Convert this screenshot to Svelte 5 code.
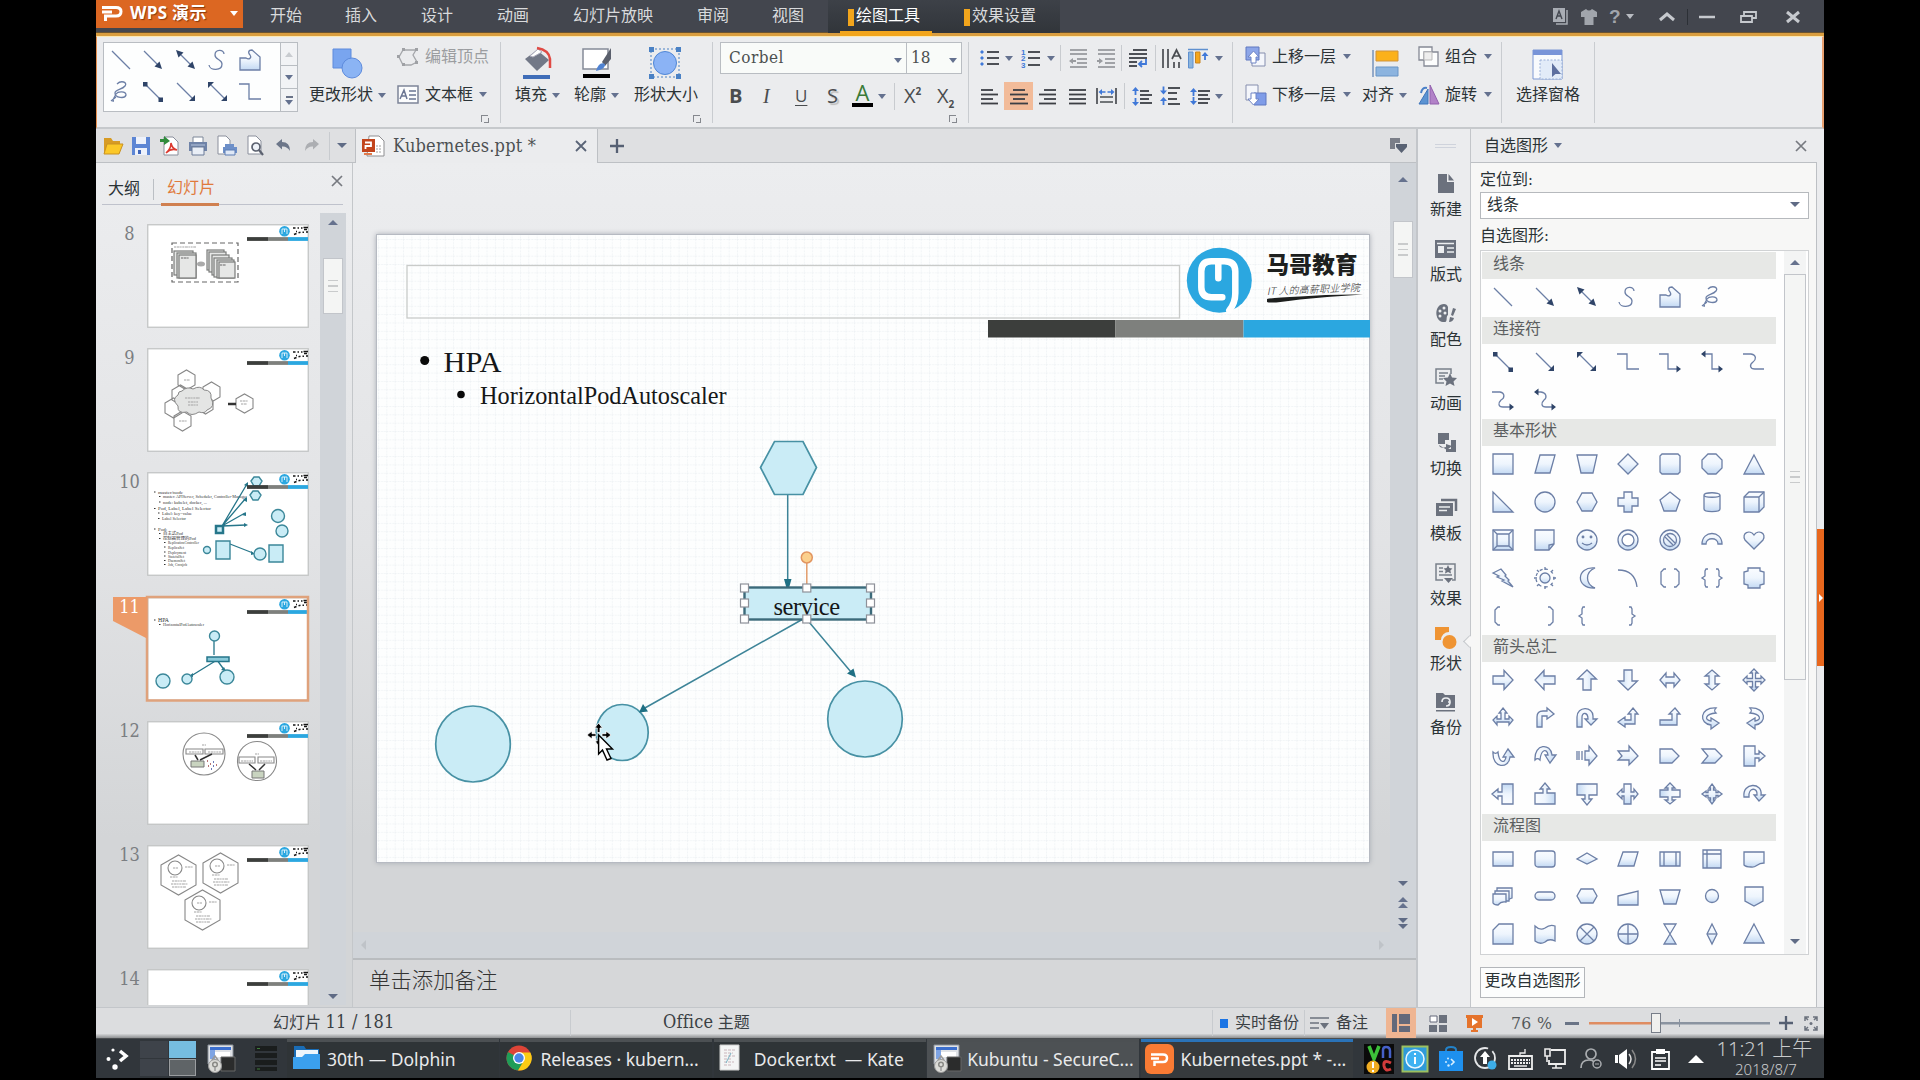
<script>
  const ln = (y, x1, x2, c = '#3c3f44') => `<path d="M${x1} ${y}H${x2}" stroke="${c}" stroke-width="1.8"/>`;
  const blueUp = (x, y) => `<path d="M${x} ${y}l3.5 4h-2.6v4h-1.8v-4h-2.6z" fill="#3f78d8"/>`;
  const blueDn = (x, y) => `<path d="M${x} ${y}l3.5-4h-2.6v-4h-1.8v4h-2.6z" fill="#3f78d8"/>`;

  // Line-style shapes, 22 x 22
  const line = {
    line: '<path d="M2 2L20 20"/>',
    arrow: '<path d="M2 2L16 16"/><path class="k" d="M20 20l-2.500-7.500-5 5z"/>',
    arrow2: '<path d="M5 5L17 17"/><path class="k" d="M20 20l-2.500-7.500-5 5z"/><path class="k" d="M1 1l2.500 7.500 5-5z"/>',
    curve: '<path d="M17 5C17 0 8 0 8 6C8 11 15 10 15 15C15 22 3 22 2 16"/>',
    free: '<path class="f" d="M1 21V9H7C10 11 13 9 11 6C9 4 9 1 13 1L21 8V21Z"/>',
    scrib: '<path d="M7 3C11-1 18 1 15 5C12 9 5 8 5 12C5 17 15 18 16 14C16 10 8 10 6 13C4 16 3 18 3 21M6 16L1 20"/>',
    conn: '<path d="M3 3L19 19"/><path class="k" d="M1 1h4.500v4.500H1zM16.500 16.500h4.500v4.500h-4.500z"/>',
    conn1: '<path d="M2 2L18 18"/><path class="k" d="M20 14v6h-6z"/>',
    conn2: '<path d="M3 3L18 18"/><path class="k" d="M20 14v6h-6zM1 7V1h6z"/>',
    elb: '<path d="M0 3H10V18H22"/>',
    elb1: '<path d="M0 3H9V18H19"/><path class="k" d="M17.500 14.500l4.500 3.500-4.500 3.500z"/>',
    elb2: '<path d="M4 3H11V18H19"/><path class="k" d="M17.500 14.500l4.500 3.500-4.500 3.500zM4.500-.5L0 3l4.500 3.500z"/>',
    cur: '<path d="M0 3H8C14 4 13 9 10 11C6 14 7 18 12 18H21"/>',
    cur1: '<path d="M0 3H8C13 4 13 9 9 11C6 14 6 18 11 18H18"/><path class="k" d="M17.500 14.500l4.500 3.500-4.500 3.500z"/>',
    cur2: '<path d="M4 3H7C13 4 13 9 10 11C7 14 7 18 12 18H18"/><path class="k" d="M17.500 14.500l4.500 3.500-4.500 3.500zM4.500-.5L0 3l4.500 3.500z"/>'
  };
  const p = (d) => `<path class="f" d="${d}"/>`;
  const n = (d) => `<path d="${d}"/>`;
  const rightArrow = 'M1 7H12V1.500L21 11L12 20.500V15H1Z';
  const turn = (deg, s) => `<g transform="rotate(${deg} 11 11)">${s}</g>`;
  const flip = (s) => `<g transform="matrix(-1 0 0 1 22 0)">${s}</g>`;
  const dbl = 'M1 11L7 4V8H15V4L21 11L15 18V14H7V18Z';
  const quad = 'M11 0L15 4H12.500V9.500H18V7L22 11L18 15V12.500H12.500V18H15L11 22L7 18H9.500V12.500H4V15L0 11L4 7V9.500H9.500V4H7Z';
  const uturn = 'M1 20V10C1 -1 17 -1 17 9V12H21L15 18L9 12H12C12 5 6 5 6 10V20Z';
  const swoop = 'M15 1C-2 0-2 17 10 18V22L18 16L10 11V14C3 13 4 7 15 6C13 4 13 3 15 1Z';
  const callR = 'M1 1H12V9H16V6L22 11L16 16V13H12V21H1Z';
  const split = 'M7 1H14V9H17V6L21 11L17 16V13H14V21H7V13H5V16L0 11L5 6V9H7Z';

  const sections = [
    { t: '线条', s: [line.line, line.arrow, line.arrow2, line.curve, line.free, line.scrib] },
    { t: '连接符', s: [line.conn, line.conn1, line.conn2, line.elb, line.elb1, line.elb2, line.cur, line.cur1, line.cur2] },
    { t: '基本形状', s: [
      p('M1 1H21V21H1Z'), p('M6 2H21L16 20H1Z'), p('M1 2H21L17 20H5Z'), p('M11 1L21 11L11 21L1 11Z'),
      p('M3 1H19L21 3V19L19 21H3L1 19V3Z'), p('M7 1H15L21 7V15L15 21H7L1 15V7Z'), p('M11 2L21 21H1Z'),
      p('M1 1V21H21Z'), '<circle class="f" cx="11" cy="11" r="10"/>', p('M6 2H16L21 11L16 20H6L1 11Z'),
      p('M7 1H15V7H21V15H15V21H7V15H1V7H7Z'), p('M11 1L21 9L17 20H5L1 9Z'),
      p('M3 4V18C3 21.500 19 21.500 19 18V4C19 1 3 1 3 4C3 7 19 7 19 4'),
      p('M1 6L6 1H21V16L16 21H1Z') + n('M1 6H16V21M16 6L21 1'),
      p('M1 1H21V21H1Z') + n('M5 5H17V17H5ZM1 1L5 5M21 1L17 5M21 21L17 17M1 21L5 17'),
      p('M1 1H20V15L15 21H1Z') + n('M15 21V16L20 15'),
      '<circle class="f" cx="11" cy="11" r="10"/><circle cx="7" cy="8" r=".8"/><circle cx="15" cy="8" r=".8"/><path d="M6 14Q11 18 16 14"/>',
      '<circle class="f" cx="11" cy="11" r="10"/><circle cx="11" cy="11" r="6" fill="#fff"/>',
      '<circle class="f" cx="11" cy="11" r="10"/><circle cx="11" cy="11" r="6.500"/><path d="M6 8L14 16M8 6L16 14"/>',
      p('M1 15C1 1 21 1 21 15H17C17 8 5 8 5 15Z'),
      p('M11 20L2 11C-2 4 7 0 11 6C15 0 24 4 20 11Z'),
      p('M1 6L9 2L14 8L13 9L17 13L16 14L21 20L10 14L12 13L5 10L7 9Z'),
      '<circle class="f" cx="11" cy="11" r="5"/><path stroke-dasharray="3 3.300" d="M11 2A9 9 0 1 1 10.900 2"/><path d="M11 0V3M11 19V22M0 11H3M19 11H22M3 3L5 5M17 17L19 19M19 3L17 5M3 19L5 17"/>',
      p('M19 1C0-1-1 22 19 21C9 17 9 5 19 1Z'), n('M1 3Q18 3 20 20'),
      n('M7 2H5L2 5V17L5 20H7M15 2H17L20 5V17L17 20H15'),
      n('M7 2H5L4 4V9L1 11L4 13V18L5 20H7M15 2H17L18 4V9L21 11L18 13V18L17 20H15'),
      p('M5 1H17V4L21 5V17L17 18V21H5V18L1 17V5L5 4Z'),
      n('M8 2H6L3 5V17L6 20H8'), n('M14 2H16L19 5V17L16 20H14'), n('M9 2H7L6 4V9L3 11L6 13V18L7 20H9'), n('M12 2H14L15 4V9L18 11L15 13V18L14 20H12')
    ] },
    { t: '箭头总汇', s: [
      p(rightArrow), turn(180, p(rightArrow)), turn(-90, p(rightArrow)), turn(90, p(rightArrow)),
      p(dbl), turn(90, p(dbl)), p(quad),
      p('M11 1L15 6H13V12H17V9L21 13L17 18V15H5V18L1 13L5 9V12H9V6H7Z'),
      p('M3 20V10Q3 4 9 4H13V1L20 7L13 12V9H8V20Z'), p(uturn),
      p('M16 1L21 7H18V17H8V20L1 15L8 10V13H14V7H11Z'), p('M16 1L21 7H18V18H1V13H13V7H10Z'),
      p(swoop), flip(p(swoop)), turn(-90, p(swoop)), flip(turn(90, p(swoop))),
      p('M9 6H13V1L21 11L13 20V15H9ZM1 6V15M3 6V15M6 6V15'), p('M1 6H12V1L21 11L12 20V15H1L5 11Z'),
      p('M1 4H13L20 11L13 18H1Z'), p('M1 4H14L21 11L14 18H1L7 11Z'), p(callR),
      turn(180, p(callR)), turn(-90, p(callR)), turn(90, p(callR)),
      p(split), turn(90, p(split)),
      p('M11 1L14 5H12.500V7H15V9.500H17V8L21 11L17 14V12.500H15V15H12.500V17H14L11 21L8 17H9.500V15H7V12.500H5V14L1 11L5 8V9.500H7V7H9.500V5H8Z'),
      p('M1 14C-1-1 20-1 18 12H22L16 18L11 12H14C15 4 5 4 6 14Z')
    ] },
    { t: '流程图', s: [
      p('M1 4H21V18H1Z'), '<rect class="f" x="1" y="3" width="20" height="16" rx="3"/>', p('M11 5L21 11L11 16L1 11Z'),
      p('M6 4H21L17 18H1Z'), p('M1 4H21V18H1Z') + n('M5 4V18M17 4V18'), p('M2 2H20V20H2Z') + n('M2 6H20M6 2V20'),
      p('M1 4H21V15C13 15 14 20 8 19Q3 19 1 17Z'),
      p('M5 3H20V13Q17 14 16 15H5Z') + p('M3 6H17V16H3Z') + p('M1 9H14V17Q9 16 6 20Q2 20 1 18Z'),
      '<rect class="f" x="1" y="7" width="20" height="8" rx="4"/>', p('M5 4H17L21 11L17 18H5L1 11Z'),
      p('M1 11L21 6V20H1Z'), p('M1 5H21L17 19H5Z'), '<circle class="f" cx="11" cy="11" r="6.500"/>', p('M2 2H20V16L11 21L2 16Z'),
      p('M7 1H21V21H1V7Z'), p('M1 3Q6 8 11 5Q16 1 21 3V18Q15 15 11 19Q6 22 1 18Z'),
      '<circle class="f" cx="11" cy="11" r="10"/><path d="M4 4L18 18M18 4L4 18"/>',
      '<circle class="f" cx="11" cy="11" r="10"/><path d="M1 11H21M11 1V21"/>',
      p('M5 1H17L5 21H17Z'), p('M11 1L16 11L11 21L6 11Z') + n('M6 11H16'), p('M11 1L21 20H1Z')
    ] }
  ];
  const gallery = [line.line, line.arrow, line.arrow2, line.curve, line.free, line.scrib, line.conn, line.conn1, line.conn2, line.elb];

  const I = {
    logo: '<path d="M0 2.500H14Q19 2.500 19 6.500Q19 11 14 11H3.500V16M0 7H10" fill="none" stroke="#fff" stroke-width="3"/>',
    change: '<path d="M1 1H19V20H1Z" fill="#79a5ef" stroke="#5e8bdc"/><circle cx="20" cy="20" r="10" fill="#8bb4f4" stroke="#5e8bdc"/>',
    edit: '<path d="M6 3H19L16 8L20 15L14 18H6L2 10Z" fill="none" stroke="#a5a7ab" stroke-width="1.300"/><path d="M5 1h3v3H5zM18 1h3v3h-3zM5 16h3v3H5zM18 14h3v3h-3zM0 8h3v3H0z" fill="#9fa1a5"/>',
    textbox: '<path d="M1 1H21V18H1Z" fill="#fbfcfd" stroke="#7e8498" stroke-width="1.500"/><path d="M3 14L7 5L10 14M5 11H9M12 6H19M12 10H19M12 14H19" stroke="#6b7693" stroke-width="1.500" fill="none"/>',
    fill: '<path d="M2 12L14 3L26 13L14 24Z" fill="#727887"/><path d="M7 9L15 2L19 5L10 10Z" fill="#fff" stroke="#aab" /><path d="M14 1Q26 3 27 12V21" stroke="#e04a44" stroke-width="2.500" fill="none"/><path d="M0 28H27V32H0Z" fill="#3f6db8"/>',
    outline: '<path d="M1 2H26V22H1Z" fill="#fff" stroke="#858a98" stroke-width="1.500"/><path d="M29 1V12L23 19L20 15Z" fill="#5a5f6c"/><path d="M14 24Q17 14 23 17Q24 22 14 24Z" fill="#5083d2"/><path d="M1 27H28V31H1Z" fill="#000"/>',
    size: '<circle cx="16" cy="16" r="11.500" fill="#8bb3f5" stroke="#4f86d6"/><path d="M2 2H30V30H2Z" fill="none" stroke="#4a81c4" stroke-dasharray="2 2"/><path d="M0 0h5v5H0zM27 0h5v5h-5zM0 27h5v5H0zM27 27h5v5h-5z" fill="#4a81c4"/>',
    bullets: [4, 10, 16].map((y) => `<path d="M2 ${y - 2}l2 2-2 2-2-2z" fill="#3f78d8"/>` + ln(y, 7, 19)).join(''),
    numbers: [4, 10, 17].map((y, i) => `<text x="0" y="${y + 3}" font-size="8" font-weight="700" font-family="Liberation Sans" fill="#3f78d8">${i + 1}</text>` + ln(y, 7, 19)).join(''),
    outdent: ln(2, 1, 18, '#999b9f') + ln(6, 1, 18, '#999b9f') + ln(11, 8, 18, '#999b9f') + ln(15, 8, 18, '#999b9f') + ln(19, 1, 18, '#999b9f') + '<path d="M0 13l4-3v2h3v2H4v2z" fill="#999b9f"/>',
    indent: ln(2, 1, 18, '#999b9f') + ln(6, 1, 18, '#999b9f') + ln(11, 8, 18, '#999b9f') + ln(15, 8, 18, '#999b9f') + ln(19, 1, 18, '#999b9f') + '<path d="M6 13l-4-3v2H0v2h2v2z" fill="#999b9f"/>',
    wrap: ln(2, 5, 19) + ln(6, 1, 19) + ln(10, 1, 19) + ln(14, 1, 9) + ln(18, 1, 9) + '<path d="M18 11V16H12M14 13L11 16L14 19" fill="none" stroke="#3f78d8" stroke-width="1.800"/>',
    vert: '<path d="M1 1V20M6 1V20" stroke="#4a4d52" stroke-width="1.700"/><path d="M10 11L14.500 2L19 11M11.500 8H17.500M12 14V20M17 14V20" stroke="#4a4d52" stroke-width="1.700" fill="none"/>',
    valign: '<path d="M0 1.500H20" stroke="#5f90cf" stroke-width="1.500"/><path d="M.500 4H5V20H.500Z" fill="#8bb5de" stroke="#5f90cf"/><path d="M7.500 4H12V15H7.500Z" fill="#f5a61b" stroke="#c88420"/>' + blueUp(17, 4),
    aleft: ln(2, 0, 12) + ln(6.500, 0, 17) + ln(11, 0, 12) + ln(15.500, 0, 17),
    acenter: ln(2, 3, 15) + ln(6.500, 0, 18) + ln(11, 3, 15) + ln(15.500, 0, 18),
    aright: ln(2, 5, 17) + ln(6.500, 0, 17) + ln(11, 5, 17) + ln(15.500, 0, 17),
    ajust: ln(2, 0, 17) + ln(6.500, 0, 17) + ln(11, 0, 17) + ln(15.500, 0, 17),
    dist: '<path d="M1 1V17M20 1V17M4 10H17M4 15H17" stroke="#4a4d52" stroke-width="1.700"/><path d="M2.500 5L6 2V4.200H9.500V5.800H6V8ZM18.500 5L15 2V4.200H11.500V5.800H15V8Z" fill="#3f78d8"/>',
    ls1: ln(4, 8, 17) + ln(8, 8, 20) + ln(12, 8, 17) + ln(16, 8, 20) + blueUp(3.500, 0) + blueDn(3.500, 19),
    ls2: ln(2, 8, 20) + ln(7, 8, 17) + ln(13, 8, 17) + ln(18, 8, 20) + blueDn(3.500, 8.500) + blueUp(3.500, 11),
    ls3: ln(4, 8, 20) + ln(8, 8, 18) + ln(12, 8, 20) + ln(16, 8, 18) + blueUp(3.500, 1) + blueDn(3.500, 18),
    up: '<path d="M7 7H20V20H7Z" fill="#f4f6fb" stroke="#858eae"/><path d="M1 1H14V14H1Z" fill="#8da6e8" stroke="#6078c0"/><path d="M8.500 5L14 11H11V17H6V11H3Z" fill="#fff" stroke="#6f84c4"/>',
    down: '<path d="M1 1H13V16H1Z" fill="#f4f6fb" stroke="#858eae"/><path d="M9 9H21V21H9Z" fill="#7f9ce8" stroke="#6078c0"/><path d="M8.500 21L14 15H11V9H6V15H3Z" fill="#fff" stroke="#6f84c4"/>',
    align: '<path d="M1 0V27" stroke="#7693bb" stroke-width="1.500"/><path d="M4 1H26V11H4Z" fill="#fbb11b" stroke="#d0933c"/><path d="M4 17H26V26H4Z" fill="#8cb4df" stroke="#6995c6"/>',
    group: '<path d="M1 1H14V14H1Z" fill="#fcfdfd" stroke="#858995" stroke-width="1.300"/><path d="M6 6H20V20H6Z" fill="#fcfdfd" stroke="#858995" stroke-width="1.300"/><path d="M6 6H14V14H6Z" fill="#eee" stroke="#bbb"/>',
    rotate: '<path d="M10 5V20H1Z" fill="#5b93d2" stroke="#3e75bb"/><path d="M12 1L21 20H12Z" fill="#b282c8" stroke="#9261ad"/><path d="M3 9Q4 3 9 4" fill="none" stroke="#4a80c8" stroke-width="2"/>',
    pane: '<path d="M1 1H30V30H1Z" fill="#f8fafd" stroke="#7d98d4"/><path d="M1 1H30V6H1Z" fill="#7894d8"/><path d="M8 11H30V30H8Z" fill="#e2ebf8" stroke="#9ab0d8" stroke-dasharray="2 1.500"/><path d="M20 14V28L23.500 25H29Z" fill="#5d6f9f"/>',
    // quick-access icons
    open: '<path d="M1 2H8L10 5H17V17H1Z" fill="#d79b24"/><path d="M4 8H20L16 18H1Z" fill="#fbc828" stroke="#c99120"/>',
    save: '<path d="M0 0H18V18H0Z" fill="#5d86d4"/><path d="M4 0H14V7H4ZM3 11H15V18H3Z" fill="#eef2fb"/><path d="M6 13H9V17H6Z" fill="#3f65b8"/>',
    pdf: '<path d="M4 1H13L18 6V19H4Z" fill="#fff" stroke="#8a8f9c"/><path d="M6 17Q11 13 11 7Q12 13 17 14Q11 12 6 17" fill="none" stroke="#dc3a30" stroke-width="1.600"/><path d="M0 3H4V0L10 5L4 9V6H0Z" fill="#2f8b3c"/>',
    print: '<path d="M4 0H14V6H4Z" fill="#fff" stroke="#7d8798"/><path d="M0 5H18V14H0Z" fill="#6f83a8"/><path d="M3 10H15V18H3Z" fill="#e9eef6" stroke="#6b7a98"/><path d="M2 8H16" stroke="#b7c5dd"/>',
    print2: '<path d="M1 0H9L13 4V18H1Z" fill="#fff" stroke="#8a8f9c"/><path d="M8 8H17V12H8ZM6 11H20V17H6Z" fill="#6d8fc8"/><path d="M8 14H18V19H8Z" fill="#dfe8f6" stroke="#5c7cb4"/>',
    preview: '<path d="M1 0H9L14 5V18H1Z" fill="#fff" stroke="#8a8f9c"/><circle cx="9" cy="11" r="4" fill="#eef2f8" stroke="#5c6270" stroke-width="1.700"/><path d="M12 14L16 19" stroke="#5c6270" stroke-width="2.200"/>',
    undo: '<path d="M0 5L6 0V3Q14 3 14 12Q11 7 6 7.500V10.500Z" fill="#6c7689"/>',
    redo: '<path d="M14 5L8 0V3Q0 3 0 12Q3 7 8 7.500V10.500Z" fill="#acaeb2"/>',
    doc: '<path d="M7 1H17L22 6V21H5Z" fill="#fff" stroke="#8f8f92"/><path d="M14 11H20M14 14H20M14 17H20" stroke="#a0a0a0" stroke-dasharray="2 1"/><path d="M0 4H13V17H0Z" fill="#c2441c"/><path d="M3.500 14V11H9V7.500H3" fill="none" stroke="#fff" stroke-width="1.800"/><path d="M2 19H10" stroke="#e07a4c" stroke-width="2"/>',
    x: '<path d="M1 1L11 11M11 1L1 11" stroke="#777a80" stroke-width="1.700"/>',
    xd: '<path d="M1 1L11 11M11 1L1 11" stroke="#5a6477" stroke-width="1.800"/>',
    plus: '<path d="M8 1V15M1 8H15" stroke="#566073" stroke-width="2.300"/>',
    tabs: '<path d="M0 0H10V5H5V11H0Z" fill="#7a7e88"/><path d="M6 6H17V9L11.500 15L6 9Z" fill="#596273"/>',
    // window controls
    note: '<path d="M3 16H14V2" stroke="#a9adb4" stroke-width="1.500" fill="none"/><path d="M0 0H12V14H0Z" fill="#a9adb4"/><path d="M3 11L6 3L9 11M4.300 8H7.700" stroke="#43474f" stroke-width="1.400" fill="none"/>',
    shirt: '<path d="M5 0Q8 3 11 0L16 3V8H12.500V16H3.500V8H0V3Z" fill="#a1a5ac"/>',
    chev: '<path d="M1 8L8 2L15 8" fill="none" stroke="#c6c9ce" stroke-width="3"/>',
    min: '<path d="M0 5H16" stroke="#c6c9ce" stroke-width="2.500"/>',
    rest: '<path d="M4 4V1H16V7H12" fill="none" stroke="#c6c9ce" stroke-width="1.800"/><path d="M1 5H12V11H1Z" fill="none" stroke="#c6c9ce" stroke-width="1.800"/>',
    close: '<path d="M1 1L13 11M13 1L1 11" stroke="#c6c9ce" stroke-width="3"/>',
    // side tabs, 22 x 22
    s0: '<path d="M3 1H12V9H19V20H3Z M13.500 1L19 7.500H13.500Z" fill="#6b717d"/>',
    s1: '<path d="M0 2H21V20H0Z" fill="#6b717d"/><path d="M2 5.500H19M12 10H19M12 14H19" stroke="#eceef0" stroke-width="1.500"/><path d="M3 8H9V15H3Z" fill="#eceef0"/>',
    s2: '<path d="M9 1C-1 1-1 18 8 19C14 20 10 14 13 12V4Q12 1 9 1Z" fill="#6b717d"/><g fill="#eceef0"><circle cx="5" cy="8" r="1.500"/><circle cx="9" cy="5" r="1.500"/><circle cx="5" cy="13" r="1.500"/><circle cx="10" cy="10" r="1.500"/></g><path d="M18 5L21 6L18 13L16 12ZM15 14L19 15Q18 19 14 19Z" fill="#6b717d"/>',
    s3: '<path d="M16 7V2H1V16H9M4 6H13M4 9H10M4 12H8" fill="none" stroke="#7a808a" stroke-width="1.500"/><path d="M15 6l2 4.500 5 .5-3.500 3.500 1 4.500-4.500-2.500L10.500 19l1-4.500L8 11l5-.5z" fill="#6b717d"/>',
    s4: '<path d="M3 1H14V8H10V12H3ZM16 8H21V20H11V17H16Z" fill="#6b717d"/><path d="M4 13Q5 17 11 15V12L17 14L12 18" fill="#6b717d"/>',
    s5: '<path d="M6 3H21V14" stroke="#6b717d" stroke-width="2.500" fill="none"/><path d="M1 6H18V19H1Z" fill="#6b717d"/><path d="M4 10H15M4 13.500H12" stroke="#eceef0" stroke-width="1.400"/>',
    s6: '<path d="M8 18H1V2H20V18H17M4 6H8M4 9.500H8M4 13H17" fill="none" stroke="#7a808a" stroke-width="1.500"/><path d="M13 3l1.400 3 3 .4-2 2 .6 3-3-1.500-3 1.500.6-3-2-2 3-.4z" fill="#6b717d"/><path d="M9 16H18L13.500 21Z" fill="#6b717d"/>',
    s7: '<path d="M0 0H14V5A8 8 0 0 0 6 13H0Z" fill="#ef9433"/><circle cx="14.500" cy="15" r="7" fill="#ef9433"/>',
    s8: '<path d="M1 2H8L10 4H20V17H1ZM1 19H20V20.500H1Z" fill="#6b717d"/><path d="M7 11Q7 7 11 7Q15 7 15 11L13 11M11 15Q15 15 15 11" fill="none" stroke="#eceef0" stroke-width="1.700"/>',
    // status bar
    notes: '<path d="M0 2H19M0 7H9M0 12H9" stroke="#6b717d" stroke-width="1.600"/><path d="M10 7H19L14.500 13Z" fill="#6b717d"/>',
    vnorm: '<path d="M0 0H5V18H0ZM7 0H18V10H7ZM7 12H18V18H7Z" fill="#64697a"/>',
    vsort: '<path d="M1 1H8V7H1Z" fill="#fff" stroke="#64697a"/><path d="M10 0H18V8H10ZM0 10H8V17H0ZM10 10H18V17H10Z" fill="#6b717d"/>',
    vshow: '<path d="M0 0H17V3H16V13H1V3H0ZM7 13H10V15H12V17H5V15H7Z" fill="#e5732c"/><path d="M6 3L12 7L6 11Z" fill="#fff"/>',
    fit: '<path d="M1 5V1H5M9 1H13V5M13 10V14H9M5 14H1V10M1 1L4 4M13 1L10 4M13 14L10 11M1 14L4 11" fill="none" stroke="#6b717d" stroke-width="1.500"/><circle cx="7" cy="7.500" r="1.500" fill="#6b717d"/>',
    // taskbar
    start: '<circle cx="7" cy="3" r="1.600" fill="#fff"/><circle cx="2.500" cy="12" r="2" fill="#fff"/><circle cx="9" cy="20" r="2.700" fill="#fff"/><path d="M14 4L20 9L14 14" fill="none" stroke="#fff" stroke-width="3.500"/>',
    crt: '<path d="M1 0H26V19H1Z" fill="#dfe2e6" stroke="#8a9099"/><path d="M3 2H24V5H3Z" fill="#3c6fce"/><path d="M3 5H8V14H3Z" fill="#7ea4e4"/><path d="M8 7H23V12H8Z" fill="#fff"/><path d="M14 12H28V26H14Z" fill="#2b2c2c" stroke="#666"/><circle cx="8" cy="21" r="6.500" fill="#dcdcd8" stroke="#999"/><circle cx="8" cy="19.500" r="2.300" fill="none" stroke="#8a8a86" stroke-width="1.500"/><path d="M8 22V26M5 15L8 11L11 15" stroke="#999" stroke-width="1.500" fill="none"/>',
    rack: '<path d="M0 0H22V5H0ZM0 7H22V12H0ZM0 14H22V19H0ZM0 21H22V25H0Z" fill="#1a1d1d"/><path d="M2 2.500H5M2 23H5" stroke="#3f7d3a"/>',
    folder: '<path d="M1 1H11L13 4H26V20H1Z" fill="#1a6cb5"/><path d="M3 5H25V12H3Z" fill="#eef6fc"/><path d="M0 12H9L12 9H27V24H0Z" fill="#3ba0ee"/>',
    chrome: '<circle cx="13" cy="13" r="12.500" fill="#dd4437"/><path d="M13 13L2 7A12.500 12.500 0 0 0 12 25.500L18 16Z" fill="#1f9d58"/><path d="M13 7.500H24.400A12.500 12.500 0 0 1 12 25.500L18 15.500Z" fill="#fbcc15"/><circle cx="13" cy="13" r="6" fill="#fff"/><circle cx="13" cy="13" r="4.700" fill="#4a86e8"/>',
    file: '<path d="M0 0H19V25H0Z" fill="#f4f5f5" stroke="#ccc"/><path d="M4 5H15M4 8H13M4 11H15M4 14H12M4 17H14M4 20H11" stroke="#c9b5bb" stroke-dasharray="3 1"/><path d="M11 8L6 18" stroke="#78b3c4"/>',
    wps: '<rect width="29" height="30" rx="6" fill="#f97b34"/><path d="M6 10.500H18Q22 10.500 22 14Q22 18 18 18H9.500V22M6 14.500H14" fill="none" stroke="#fff" stroke-width="2.500"/>',
    vnc: '<path d="M0 0H30V30H0Z" fill="#0a0a0a"/><path d="M5 2L10 15L15 2" fill="none" stroke="#3cc03a" stroke-width="3.500"/><path d="M19 14V6Q19 3 22 3Q26 3 26 7V14" fill="none" stroke="#4560c8" stroke-width="2.500"/><path d="M27 19Q19 15 20 22Q21 28 27 25" fill="none" stroke="#d23b3b" stroke-width="3"/><circle cx="9" cy="23" r="6.500" fill="#f1ad22"/><path d="M9 18V24M9 26V28" stroke="#fff" stroke-width="2"/>',
    info: '<path d="M.500 .500H25.500V25.500H.500Z" fill="#2f9ad8" stroke="#9cc060" stroke-width="2"/><circle cx="13" cy="13" r="9" fill="#3fb2f2" stroke="#e8f6ff" stroke-width="1.500"/><path d="M13 11V18M13 7V9" stroke="#fff" stroke-width="2"/>',
    store: '<path d="M7 7V4Q7 1 12 1Q17 1 17 4V7" fill="none" stroke="#2382c8" stroke-width="2"/><path d="M0 5H24V25H0Z" fill="#1e90ee"/><path d="M12 13L15 16L12 19" fill="none" stroke="#d8efff" stroke-width="1.600"/><circle cx="9" cy="12.500" r="1" fill="#cfeaff"/><circle cx="7" cy="16" r="1" fill="#cfeaff"/><circle cx="9.500" cy="19.500" r="1.200" fill="#cfeaff"/>',
    upd: '<circle cx="11" cy="11" r="10" fill="none" stroke="#e4e6e8" stroke-width="1.800" stroke-dasharray="50 5"/><path d="M11 4L16 10H13V17H9V10H6Z" fill="#fff"/><circle cx="18" cy="18" r="4.500" fill="#3daee9"/>',
    kbd: '<path d="M1 8H24V21H1Z" fill="none" stroke="#eee" stroke-width="1.800"/><path d="M3 12H22M3 15H22" stroke="#eee" stroke-width="2" stroke-dasharray="2 1"/><path d="M6 18H19" stroke="#eee" stroke-width="1.500"/><path d="M12 8V5H17V1" fill="none" stroke="#eee" stroke-width="1.300"/>',
    net: '<path d="M7 2H21V16H5V12" fill="none" stroke="#eee" stroke-width="1.800"/><path d="M1 1H6V8H1ZM3 8V14M12 16V20M8 20H18" fill="none" stroke="#eee" stroke-width="1.600"/>',
    user: '<circle cx="11" cy="6" r="5" fill="none" stroke="#aaadb0" stroke-width="1.700"/><path d="M1 20Q1 12 9 12Q13 12 14 14" fill="none" stroke="#aaadb0" stroke-width="1.700"/><circle cx="17" cy="16" r="4" fill="none" stroke="#aaadb0" stroke-width="1.500"/><path d="M15 16H19" stroke="#aaadb0"/>',
    vol: '<path d="M0 7H3V15H0ZM4 7L12 1V21L4 15Z" fill="#fff"/><path d="M14 6Q18 11 14 16" fill="none" stroke="#ddd" stroke-width="1.500"/><path d="M17 2Q24 11 17 20" fill="none" stroke="#888" stroke-width="1.500"/>',
    clip: '<path d="M1 4H18V21H1Z" fill="none" stroke="#fff" stroke-width="1.800"/><path d="M5 1H14V6H5Z" fill="#fff"/><path d="M4 10H15M4 13H15M4 17H10" stroke="#fff" stroke-width="1.500"/>'
  };

  const side = ['新建', '版式', '配色', '动画', '切换', '模板', '效果', '形状', '备份'];
  const tabs = ['开始', '插入', '设计', '动画', '幻灯片放映', '审阅', '视图'];

  // Slide thumbnails, 162 x 104
  const hex = (x, y, w, h) => `M${x} ${y + h / 4}L${x + w / 2} ${y}L${x + w} ${y + h / 4}V${y + h * 0.75}L${x + w / 2} ${y + h}L${x} ${y + h * 0.75}Z`;
  const g = 'fill="none" stroke="#888" stroke-width="1.100"';
  const txt = (x, y, w, o = '#a4a4a4') => `<path d="M${x} ${y}H${x + w}" stroke="${o}" stroke-width="1.100" stroke-dasharray="2 .6 3 .5 1.500 .7"/>`;
  const tiny = (x, y, w, s, size = 4) => `<path d="M${x - 4} ${y - 1.5}h1.500" stroke="#333" stroke-width="1.200"/><text x="${x}" y="${y}" font-size="${size}" textLength="${w}" lengthAdjust="spacingAndGlyphs" font-family="Liberation Serif, Noto Sans CJK SC" fill="#333">${s}</text>`;
  const c = 'fill="#c9ecf6" stroke="#3b8799" stroke-width="1.400"';
  const sheet = (list) => list.map(([x, y, w, h]) => `<rect x="${x}" y="${y}" width="${w}" height="${h}" fill="#e6e7e6" stroke="#7b7c7b" stroke-width="1.200"/>`).join('');
  const pod = (x, y, w = 35, h = 40) => `<path d="${hex(x, y, w, h)}" ${g}/><circle cx="${x + 14}" cy="${y + 13}" r="7" ${g}/>` + txt(x + 12, y + 13, 5) + txt(x + 24, y + 12, 8) + txt(x + 9, y + 22, 8) + txt(x + 11, y + 26, 14) + txt(x + 10, y + 29, 17) + txt(x + 11, y + 32, 14);
  const slides = [
    { n: 8, a: `<path d="M25 19H91V58H25Z" fill="none" stroke="#666" stroke-width="1.200" stroke-dasharray="5 3"/>${txt(27, 23, 22)}` + sheet([[27, 27, 19, 24], [30, 29, 19, 25], [32, 31, 17, 23], [60, 26, 17, 20], [62, 28, 17, 20], [65, 31, 17, 20], [67, 34, 18, 19], [70, 36, 17, 18], [72, 38, 16, 16]]) + `<ellipse cx="54" cy="40" rx="4" ry="2.500" fill="#aaa"/>${txt(34, 34, 8, '#666')}${txt(73, 41, 6, '#666')}` },
    { n: 9, a: `<path d="${hex(31, 22, 17, 20)}${hex(25, 37, 17, 20)}${hex(56, 34, 17, 20)}${hex(18, 50, 17, 20)}${hex(51, 48, 15, 18)}${hex(27, 63, 17, 20)}${hex(89, 46, 17, 19)}" ${g}/><path d="M35 43Q40 38 46 41Q53 37 57 42Q65 42 64 50Q69 59 60 62Q58 66 52 64Q44 69 40 64Q30 66 31 58Q24 51 31 47Q31 43 35 43Z" fill="#e4e5e4" stroke="#888"/>${txt(38, 50, 15)}${txt(41, 54, 10)}${txt(41, 57, 10)}${txt(37, 32, 6)}${txt(32, 73, 8)}${txt(93, 53, 8)}${txt(94, 56, 6)}<path d="M81 56H89" stroke="#333" stroke-width="2.500"/>` },
    { n: 10, a: [[11, 21.5, 25, 'master/node', 5], [16, 26, 84, 'master: APIServer, Scheduler, Controller-Manager'], [16, 31.5, 44, 'node: kubelet, docker, ...'], [11, 38, 53, 'Pod, Label, Label Selector', 5], [15, 42.5, 30, 'Label: key=value'], [15, 48, 24, 'Label Selector'], [11, 58.5, 9, 'Pod:', 5], [16, 63, 20, '自主式Pod'], [16, 68, 33, '控制器管理的Pod'], [21, 72, 31, 'ReplicationController'], [21, 76.5, 16, 'ReplicaSet'], [21, 81.5, 18, 'Deployment'], [21, 85.5, 16, 'StatefulSet'], [21, 90, 17, 'DaemonSet'], [21, 94, 19, 'Job, Cronjob']].map(([x, y, w, s, z]) => tiny(x, y, w, s, z)).join('') + `<path d="M75 54L100 12M75 54L99 26M75 54L98 41M75 54L99 53M83 72L106 81" fill="none" stroke="#26768a" stroke-width="1.300"/><g fill="#26768a"><path d="M101 10v5l-4-2zM100 25v5l-4-2zM99 40v4l-4-1zM101 53l-4-2v4zM108 82l-4-3v4z"/></g><path d="M69 54H76V61H69Z" fill="#c9ecf6" stroke="#26768a" stroke-width="2.500"/><path d="M104 9L107 5H112L115 9L112 14H107ZM103 23L106 19H111L114 23L111 28H106ZM69 69H83V87H69ZM122 73H136V90H122Z" ${c}/><circle cx="131" cy="44" r="6.500" ${c}/><circle cx="135" cy="59" r="6" ${c}/><circle cx="113" cy="82" r="6" ${c}/><circle cx="60" cy="78" r="3.500" ${c}/>` },
    { n: 11, sel: true, a: tiny(11, 24.5, 11, 'HPA', 5.5) + tiny(16, 29, 41, 'HorizontalPodAutoscaler') + `<path d="M67 43V58M70 63L44 79M70 63L78 74" stroke="#26768a" stroke-width="1.300"/><path d="M46 76v4l-4-1zM79 74l-5-1 3-3z" fill="#26768a"/><path d="M60 60H82V64.500H60Z" fill="#8acada" stroke="#26768a" stroke-width="1.500"/><circle cx="67.500" cy="39" r="5" ${c}/><circle cx="16" cy="84" r="7" ${c}/><circle cx="40" cy="82" r="5" ${c}/><circle cx="80" cy="80" r="7" ${c}/>` },
    { n: 12, a: `<circle cx="57" cy="33" r="21" ${g}/><circle cx="110" cy="40" r="19.500" ${g}/><path d="M39 28H56V33H39ZM58 28H76V33H58ZM92 36H108V42H92ZM111 36H127V42H111Z" ${g}/><path d="M44 40H57V46H44ZM105 50H117V57H105Z" fill="#c9d4c0" stroke="#777"/><path d="M48 34L51 39M53 39L65 33M102 43L109 49M118 43L112 49" stroke="#333" stroke-width="1.500"/>${txt(55, 24, 4)}${txt(42, 31, 12)}${txt(61, 31, 13)}${txt(94, 40, 12)}${txt(113, 40, 12)}${txt(108, 33, 4)}<path d="M60 40h1M63 43h1M61 45h1M69 44h1" stroke="#a04848" stroke-width="1.500"/><path d="M66 41h1M64 48h1M66 45h1" stroke="#3d4fa0" stroke-width="1.500"/>` },
    { n: 13, a: pod(14, 10) + pod(56, 8) + pod(38, 45) },
    { n: 14, a: '' }
  ];

  const tasks = [
    { i: 'folder', t: '30th — Dolphin', w: 27 }, { i: 'chrome', t: 'Releases · kubern...', w: 26 },
    { i: 'file', t: 'Docker.txt  — Kate', w: 20 }, { i: 'crt', t: 'Kubuntu - SecureC...', w: 28, k: 'lit' },
    { i: 'wps', t: 'Kubernetes.ppt * -...', w: 29, k: 'on' }
  ];
</script>

{#snippet ic(name, w, h)}
  <svg class="ic" width={w} height={h} viewBox="0 0 {w} {h}">{@html I[name]}</svg>
{/snippet}
{#snippet shape(s)}
  <svg class="shape" width="22" height="22" viewBox="0 0 22 22">{@html s}</svg>
{/snippet}
{#snippet logo(size)}
  <svg class="ic" width={size} height={size} viewBox="0 0 66 66">
    <circle cx="33" cy="33" r="32.500" fill="#2ba7e0" />
    <path d="M36 50H25Q15 50 15 40V24Q15 14 25 14H38Q49 14 49 24V46Q49 56 43 63M32 14V31" fill="none" stroke="#fff" stroke-width="6.500" stroke-linecap="round" />
  </svg>
{/snippet}

<div class="screen">
  <svg class="defs" width="0" height="0"><defs><linearGradient id="sg" x1="0" y1="0" x2="0" y2="1"><stop offset="0" stop-color="#fafcff" /><stop offset=".5" stop-color="#eef5fd" /><stop offset="1" stop-color="#c3d9f3" /></linearGradient></defs></svg>

  <header class="title">
    <div class="brand">{@render ic('logo', 20, 17)}<b>WPS 演示</b><i class="caret w"></i></div>
    <nav class="menu">{#each tabs as t}<span>{t}</span>{/each}</nav>
    <div class="ctx"><span class="act"><em></em>绘图工具</span><span><em></em>效果设置</span></div>
    <div class="ctl">
      {@render ic('note', 15, 17)}{@render ic('shirt', 16, 16)}<span class="q">?</span><i class="caret g"></i>{@render ic('chev', 16, 10)}<i class="vs"></i>{@render ic('min', 16, 10)}{@render ic('rest', 17, 12)}{@render ic('close', 14, 12)}
    </div>
  </header>

  <section class="ribbon">
    <div class="grp g1">
      <div class="gal">
        <div class="galgrid">{#each gallery as s}{@render shape(s)}{/each}</div>
        <div class="galbtn"><span><i class="tri up faint"></i></span><span><i class="caret"></i></span><span class="more"><i class="caret"></i></span></div>
      </div>
      <div class="big">{@render ic('change', 31, 32)}<span>更改形状<i class="caret"></i></span></div>
      <div class="two">
        <div class="dis">{@render ic('edit', 22, 20)}编辑顶点</div>
        <div>{@render ic('textbox', 22, 20)}文本框<i class="caret"></i></div>
      </div>
      <i class="launch"></i>
    </div>
    <div class="grp g2">
      <div class="big">{@render ic('fill', 28, 32)}<span>填充<i class="caret"></i></span></div>
      <div class="big">{@render ic('outline', 30, 32)}<span>轮廓<i class="caret"></i></span></div>
      <div class="big">{@render ic('size', 32, 32)}<span>形状大小</span></div>
      <i class="launch"></i>
    </div>
    <div class="grp g3">
      <div class="fontrow"><div class="fname">Corbel<i class="caret"></i></div><div class="fsize">18<i class="caret"></i></div></div>
      <div class="fmt"><b>B</b><i class="it">I</i><u>U</u><span class="sh">S</span><span class="fc">A</span><i class="caret"></i><i class="sep"></i><span>X<sup>2</sup></span><span>X<sub>2</sub></span></div>
      <i class="launch"></i>
    </div>
    <div class="grp g4">
      <div class="p1">{@render ic('bullets', 20, 20)}<i class="caret"></i>{@render ic('numbers', 20, 21)}<i class="caret"></i><i class="sep"></i>{@render ic('outdent', 19, 21)}{@render ic('indent', 19, 21)}<i class="sep"></i>{@render ic('wrap', 20, 20)}<i class="sep"></i>{@render ic('vert', 20, 21)}{@render ic('valign', 21, 21)}<i class="caret"></i></div>
      <div class="p2">{@render ic('aleft', 17, 17)}<span class="hot">{@render ic('acenter', 18, 17)}</span>{@render ic('aright', 17, 17)}{@render ic('ajust', 17, 17)}{@render ic('dist', 21, 18)}<i class="sep"></i>{@render ic('ls1', 20, 19)}{@render ic('ls2', 20, 20)}{@render ic('ls3', 20, 19)}<i class="caret"></i></div>
    </div>
    <div class="grp g5">
      <div class="two a"><div>{@render ic('up', 21, 21)}上移一层<i class="caret"></i></div><div>{@render ic('down', 21, 21)}下移一层<i class="caret"></i></div></div>
      <div class="big">{@render ic('align', 27, 28)}<span>对齐<i class="caret"></i></span></div>
      <div class="two b"><div>{@render ic('group', 21, 21)}组合<i class="caret"></i></div><div>{@render ic('rotate', 21, 21)}旋转<i class="caret"></i></div></div>
    </div>
    <div class="grp g6"><div class="big">{@render ic('pane', 31, 31)}<span>选择窗格</span></div></div>
  </section>

  <div class="body">
    <div class="work">
      <div class="docbar">
        <div class="quick">{@render ic('open', 21, 19)}{@render ic('save', 18, 18)}{@render ic('pdf', 19, 20)}{@render ic('print', 18, 18)}{@render ic('print2', 20, 20)}{@render ic('preview', 17, 19)}{@render ic('undo', 15, 13)}{@render ic('redo', 15, 13)}<i class="sep"></i><i class="caret lg"></i></div>
        <div class="doctab">{@render ic('doc', 23, 22)}<span>Kubernetes.ppt *</span>{@render ic('xd', 12, 12)}</div>
        <div class="rest">{@render ic('plus', 16, 16)}{@render ic('tabs', 17, 15)}</div>
      </div>
      <div class="mid">
        <aside class="left">
          <div class="lhead"><span>大纲</span><i></i><span class="on">幻灯片</span>{@render ic('x', 12, 12)}</div>
          <div class="lbody">
            <div class="thumbs">
              {#each slides as s}
                <div class="th" class:sel={s.sel}>
                  <div class="no">{s.n}</div>
                  <svg class="pic" width="162" height="104" viewBox="0 0 162 104">
                    <rect x=".75" y=".75" width="160.500" height="102.500" fill="#fff" stroke="#c3c5c5" stroke-width="1.300" />
                    {@html s.a}
                    <path d="M100 15H121" stroke="#3c3e3c" stroke-width="3.800" /><path d="M121 15H141" stroke="#7e807d" stroke-width="3.800" /><path d="M141 15H161" stroke="#2ba7e0" stroke-width="3.800" />
                    <circle cx="137.500" cy="7.300" r="5.300" fill="#2ba7e0" /><path d="M135 10V5H140V10M137.500 5V8" fill="none" stroke="#d9f0fa" stroke-width="1" />
                    <path d="M146 4h2.500m2 0h1.500m2 0h1.500m1-.5h4.500M157 5.500h3M149 7.500h1M147 10.500l2.500-1m2-.7l2-.5m2 0h1.500m2-.3h2" stroke="#161616" stroke-width="1.500" fill="none" />
                    {#if s.sel}<rect x="0" y="0" width="161" height="103.500" fill="none" stroke="#dfa27c" stroke-width="2.500" />{/if}
                  </svg>
                </div>
              {/each}
            </div>
            <div class="sb lsb"><i class="tri up"></i><div class="grip"><i></i><i></i><i></i></div><i class="caret lg"></i></div>
          </div>
        </aside>
        <main class="center">
          <div class="canvas">
            <div class="stage">
              <div class="slide">
                <svg width="994" height="629" viewBox="376 234 994 629">
                  <defs><pattern id="grid" x="378" y="239" width="8.350" height="8.350" patternUnits="userSpaceOnUse"><path d="M0 .5H8.350M.5 0V8.350" stroke="#ecf0f3" stroke-width=".7" stroke-dasharray="2 1" fill="none" /></pattern></defs>
                  <rect x="376" y="234" width="994" height="629" fill="#fdfefe" /><rect x="376" y="234" width="994" height="629" fill="url(#grid)" />
                  <rect x="376.500" y="234.500" width="993" height="628" fill="none" stroke="#b6bac2" />
                  <rect x="407" y="265.500" width="772.500" height="52.500" fill="none" stroke="#c9cbc9" stroke-width="1.300" />
                  <path d="M988 320H1115.500V337.500H988Z" fill="#3c3e3c" /><path d="M1115.500 320H1243.500V337.500H1115.500Z" fill="#7e807d" /><path d="M1243.500 320H1370.500V337.500H1243.500Z" fill="#2ba7e0" />
                  <g transform="translate(1186.300 247.300)">{@render logo(66)}</g>
                  <text class="brandtx" x="1266.500" y="273" textLength="91">马哥教育</text>
                  <text class="slogan" x="1267" y="295" textLength="93" transform="rotate(-2.500 1267 295)">IT 人的高薪职业学院</text>
                  <path d="M1267 299Q1272 298 1300 296.500Q1330 294 1363 294.500Q1330 296.500 1300 299.500Q1270 304 1267 302Z" fill="#1d1f1e" />
                  <g fill="#0a0a0a"><circle cx="424.700" cy="360.500" r="4.500" /><circle cx="461" cy="394.500" r="3.800" /></g>
                  <text class="st" x="443.500" y="371.500" font-size="29" textLength="58" lengthAdjust="spacingAndGlyphs">HPA</text>
                  <text class="st" x="480" y="404" font-size="25" textLength="246.500" lengthAdjust="spacingAndGlyphs">HorizontalPodAutoscaler</text>
                  <g fill="#caecf6" stroke="#4791a4" stroke-width="1.700">
                    <path d="M760.500 467.500L774.500 441.500H803L816.500 467.500L803 494.500H774.500Z" />
                    <ellipse cx="473" cy="744" rx="37.300" ry="38" /><ellipse cx="622.200" cy="732.500" rx="26" ry="28" /><ellipse cx="865" cy="719" rx="37.300" ry="38" />
                  </g>
                  <path d="M787.700 495V582M803 619L644 708.500M809 622L851 672" stroke="#3d8498" stroke-width="1.500" />
                  <path d="M784 579H791.500L789 588H786.500ZM639 712.500L643 704L648 711.500ZM856 677.500L847 673.500L853.500 668.500Z" fill="#1f7084" />
                  <rect x="744.500" y="587.500" width="126.500" height="32" fill="#caecf6" stroke="#3b6a7a" stroke-width="2.400" />
                  <text class="st" x="773.500" y="614.500" font-size="24.500" textLength="66.500">service</text>
                  <path d="M806.800 563V586" stroke="#e29c6b" stroke-width="1.500" /><circle cx="806.800" cy="557.500" r="5.500" fill="#fbd08d" stroke="#e29560" stroke-width="1.500" />
                  <g fill="#fff" stroke="#8e9199" stroke-width="1.200">{#each [744.5, 806.8, 870.5] as x}{#each [588, 603, 619] as y}{#if x !== 806.8 || y !== 603}<rect x={x - 4} y={y - 4} width="8" height="8" />{/if}{/each}{/each}</g>
                  <g stroke="#fff" stroke-width=".8" fill="#000"><path d="M598.600 723L602.500 728H600V732.500H597.200V728H594.700ZM587 735L592 731V733.700H596V736.300H592V739ZM611 735L606 731V733.700H602V736.300H606V739ZM598.600 746L595 741H597.200V738H600Z" /></g>
                  <path d="M598.600 735V754L602.500 750L607 760L611 758.500L606.500 749H612.500Z" fill="#fff" stroke="#000" stroke-width="1.400" />
                </svg>
              </div>
              <div class="hsb"><i class="hl"></i><i class="hr"></i></div>
            </div>
            <div class="sb csb"><i class="tri up"></i><div class="grip"><i></i><i></i><i></i></div><div class="ends"><i class="caret lg"></i><i class="tri up"></i><i class="tri up"></i><i class="caret lg"></i><i class="caret lg"></i></div></div>
          </div>
          <div class="note">单击添加备注</div>
        </main>
      </div>
    </div>

    <nav class="side">
      <i class="handle"></i>
      {#each side as t, i}<div class="si" class:cur={i === 7}>{@render ic('s' + i, 22, 22)}<span>{t}</span></div>{/each}
    </nav>

    <aside class="panel">
      <div class="ph"><span>自选图形</span><i class="caret"></i>{@render ic('x', 12, 12)}</div>
      <div class="pmain">
        <div class="pb">
          <label>定位到:</label>
          <div class="sel2">线条<i class="caret lg"></i></div>
          <label>自选图形:</label>
          <div class="list">
            <div class="secs">
              {#each sections as s}<h4>{s.t}</h4><div class="sg">{#each s.s as d}{@render shape(d)}{/each}</div>{/each}
            </div>
            <div class="sb psb"><i class="tri up"></i><div class="grip"><i></i><i></i><i></i></div><i class="caret lg"></i></div>
          </div>
          <button>更改自选图形</button>
        </div>
        <div class="edge"><div><i></i></div></div>
      </div>
    </aside>
  </div>

  <footer class="status">
    <span>幻灯片 <q>11 / 181</q></span><i class="sep"></i><span><q>Office</q> 主题</span><i class="sep"></i><em></em><span>实时备份</span><i class="sep"></i>{@render ic('notes', 20, 14)}<span>备注</span><span class="vn">{@render ic('vnorm', 18, 18)}</span>{@render ic('vsort', 18, 17)}{@render ic('vshow', 17, 17)}<span class="pc">76 %</span><i class="minus"></i><div class="slider"><b></b><u></u></div>{@render ic('plus', 16, 16)}{@render ic('fit', 14, 15)}
  </footer>

  <div class="task">
    <div class="tl">{@render ic('start', 23, 24)}<div class="pager"><i></i><i class="a"></i><i></i><i class="b"></i></div>{@render ic('crt', 29, 28)}{@render ic('rack', 22, 26)}</div>
    {#each tasks as t}<div class="tk {t.k ?? ''}"><span>{@render ic(t.i, t.w, t.i === 'wps' ? 30 : 27)}</span><p>{t.t}</p></div>{/each}
    <div class="tray">{@render ic('vnc', 30, 30)}{@render ic('info', 26, 26)}{@render ic('store', 24, 26)}{@render ic('upd', 23, 23)}{@render ic('kbd', 25, 22)}{@render ic('net', 22, 22)}{@render ic('user', 22, 22)}{@render ic('vol', 22, 22)}{@render ic('clip', 19, 22)}<i class="tri up white"></i>
      <div class="clock"><span>11:21 上午</span><small>2018/8/7</small></div>
    </div>
  </div>
</div>

<style>
  :global(body) { background: #000; }
  .screen { width: 1728px; height: 1080px; margin-left: 96px; overflow: hidden; background: #000; font: 16px/18px 'DejaVu Serif', 'Noto Sans CJK SC', serif; font-stretch: condensed; color: #2b3336; display: flex; flex-direction: column; white-space: nowrap; }
  .screen :global(*) { box-sizing: border-box; }
  .defs { position: absolute; }
  .ic, .shape { display: block; flex: none; overflow: visible; }
  .shape { fill: none; stroke: #6c7fa6; stroke-width: 1.3; }
  .shape :global(.f) { fill: url(#sg); }
  .shape :global(.k) { fill: #2f4468; stroke: none; }
  .caret { display: inline-block; flex: none; width: 0; height: 0; border: 4px solid transparent; border-top: 5px solid #64718f; border-bottom: 0; }
  .caret.w { border-top-color: #fff; }
  .caret.g { border-top-color: #b9bcc2; }
  .caret.lg { border-width: 5px 5px 0; border-top-color: #5f6b85; }
  .tri.up { display: block; width: 0; height: 0; border: 5px solid transparent; border-bottom: 5px solid #66728e; border-top: 0; }
  .tri.faint { border-bottom-color: #c9ccd0; border-width: 0 4px 5px; }
  .tri.white { border-width: 0 8px 8px; border-bottom-color: #fff; }
  .sep { width: 1px; background: #c8cbcf; }

  .title { height: 36px; flex: none; display: flex; align-items: flex-start; background: #43464e; border-bottom: 3px solid #d99d3f; box-shadow: inset 0 -1px #6b5330; color: #d9dadc; }
  .brand { width: 147px; height: 28px; background: #dc6722; color: #fff; display: flex; align-items: center; padding: 0 5px 2px 6px; text-shadow: 1px 1px 1px #8a3a0c; }
  .brand b { font: 700 17px/20px 'Open Sans', 'Noto Sans CJK SC', sans-serif; margin: 0 auto 0 8px; letter-spacing: .3px; }
  .menu { display: grid; grid-template-columns: 75px 76px 76px 76px 124px 75px 55px; padding-left: 27px; height: 31px; align-items: center; }
  .ctx { display: grid; grid-template-columns: 92px 80px; column-gap: 24px; height: 33px; width: 232px; padding-left: 12px; background: linear-gradient(#3d4148, #31353a); margin-left: 1px; }
  .ctx span { display: flex; align-items: center; gap: 2px; padding: 0 0 4px 8px; height: 36px; }
  .ctx .act { border-bottom: 5px solid #f2a51c; color: #fff; padding-bottom: 0; }
  .ctx em { width: 6px; height: 17px; background: #f2a51c; margin-top: 3px; flex: none; }
  .ctl { display: grid; grid-template-columns: 28px 28px 17px 33px 28px 12px 41px 46px 14px; height: 33px; align-items: center; margin-left: 493px; }
  .q { font: 700 19px/20px 'Liberation Sans', sans-serif; color: #a1a5ac; }
  .vs { width: 1px; height: 16px; background: #2c3036; }

  .ribbon { height: 93px; flex: none; display: flex; background: #ebecee; border-left: 1px solid #e8904f; border-right: 2px solid #e8a070; border-bottom: 2px solid #c6c9cc; border-top: 1px solid #fce9b4; padding-top: 5px; font-size: 16px; }
  .grp { height: 81px; border-right: 1px solid #c9ccd0; display: flex; flex: none; position: relative; }
  .launch { position: absolute; right: 12px; bottom: 1px; width: 7px; height: 7px; border: solid #85888e; border-width: 1.5px 0 0 1.5px; }
  .launch::after { content: ''; position: absolute; right: -1px; bottom: -1px; width: 4px; height: 4px; border: solid #85888e; border-width: 0 1.5px 1.5px 0; }
  .big { display: flex; flex-direction: column; height: 62px; }
  .big > span { display: flex; align-items: center; height: 18px; margin-top: auto; }
  .big .caret { margin-left: 5px; }
  .two > div { height: 39px; display: flex; align-items: center; }
  .two > div:first-child { height: 29px; margin-bottom: 4px; }
  .g1 { width: 404px; padding-left: 6px; }
  .g1 .big { width: 88px; margin-left: 11px; padding-top: 6px; }
  .g1 .big .ic { margin-left: 23px; }
  .g1 .two .ic { margin-right: 6px; }
  .g1 .two .caret { margin-left: 6px; }
  .dis { color: #9b9da0; }
  .gal { width: 195px; height: 70px; border: 1.5px solid #b9bdc2; background: #fdfefe; display: flex; flex: none; }
  .galgrid { display: grid; grid-template-columns: repeat(5, 32.3px); grid-auto-rows: 32px; padding: 6px 0 0 6px; width: 176px; flex: none; }
  .galbtn { flex: 1; border-left: 1px solid #b9bdc2; background: #f2f3f5; }
  .galbtn span { height: 23px; display: flex; align-items: center; justify-content: center; border-bottom: 1px solid #b9bdc2; }
  .galbtn span:last-child { border: 0; flex-direction: column; gap: 2px; }
  .more::before { content: ''; width: 7px; height: 1.5px; background: #6a7388; }
  .g2 { width: 212px; }
  .g2 .big { padding-top: 5px; }
  .g2 .big:nth-child(1) { margin-left: 14px; width: 59px; }
  .g2 .big:nth-child(2) { width: 60px; }
  .g2 .big:nth-child(1) .ic, .g2 .big:nth-child(2) .ic { margin-left: 8px; }
  .g2 .big:nth-child(3) .ic { margin-left: 15px; }
  .g3 { width: 256px; flex-direction: column; padding-left: 7px; }
  .fontrow { width: 242px; height: 32px; border: 1.5px solid #b9bdc2; background: #f9fbf9; display: flex; font-size: 17px; }
  .fname { width: 185px; padding: 0 4px 0 8px; letter-spacing: .5px; }
  .fsize { flex: 1; padding: 0 4px; border-left: 1px solid #b9bdc2; }
  .fname, .fsize { display: flex; align-items: center; justify-content: space-between; color: #4c5050; padding-bottom: 2px; }
  .fontrow .caret { margin-top: 6px; }
  .fmt { display: grid; grid-template-columns: 34px 32px 32px 22px 30px 12px 13px 33px 26px; height: 36px; margin-top: 4px; align-items: center; padding-left: 9px; font: 20px/24px 'Open Sans', sans-serif; color: #4a4d4f; }
  .fmt .it { font-family: 'Liberation Serif', serif; }
  .fmt u { font-size: 17px; text-underline-offset: 3px; }
  .sh { text-shadow: 2px 2px 1px #bbb; }
  .fmt .fc { width: 21px; border-bottom: 4px solid #000; color: #3a7a38; line-height: 20px; text-align: center; font-size: 22px; margin-left: 3px; height: 25px; margin-top: -4px; }
  .fmt .sep { height: 27px; margin-left: 3px; }
  .fmt .caret { margin-left: -1px; }
  sup, sub { font-size: 10px; line-height: 0; font-weight: 700; }
  .g4 { width: 264px; flex-direction: column; }
  .p1 { display: grid; grid-template-columns: 25px 16px 26px 13px 9px 28px 24px 7px 27px 7px 26px 27px 8px; height: 32px; margin-bottom: 2px; align-items: center; padding-left: 11px; }
  .p2 { display: grid; grid-template-columns: 23px 35px 30px 27px 28px 8px 28px 30px 25px 8px; height: 40px; align-items: center; padding-left: 12px; }
  .p1 .sep, .p2 .sep { height: 26px; }
  .hot { width: 29px; height: 28px; background: #f2bb99; display: grid; place-items: center; }
  .g5 { width: 269px; }
  .two.a { width: 117px; margin-left: 12px; }
  .two.a .ic, .two.b .ic { margin-right: 6px; }
  .two .caret { margin-left: 7px; }
  .g5 .big { width: 56px; padding-top: 8px; }
  .g5 .big .ic { margin-left: 10px; }
  .g6 { width: 93px; padding-left: 14px; }
  .g6 .big { padding-top: 7px; }
  .g6 .big .ic { margin-left: 16px; }

  .body { height: 878px; flex: none; display: flex; background: #ebecee; }
  .work { width: 1322px; display: flex; flex-direction: column; border-right: 2px solid #c3c6ca; flex: none; }
  .docbar { height: 34px; display: flex; }
  .quick { width: 260px; display: grid; grid-template-columns: 29px 28px 29px 28px 30px 29px 29px 24px 8px 12px; align-items: center; padding-left: 7px; background: #dfe0e2; border-bottom: 1.5px solid #bdc0c4; border-right: 1px solid #bdc0c4; }
  .quick .sep { height: 28px; }
  .doctab { width: 242px; display: flex; align-items: center; padding-left: 6px; border-right: 1px solid #bdc0c4; color: #4d5153; font-size: 18px; letter-spacing: .2px; }
  .doctab span { width: 190px; padding-left: 8px; }
  .rest { flex: 1; display: flex; justify-content: space-between; align-items: center; padding: 0 9px 0 11px; background: #dfe0e2; border-bottom: 1.5px solid #bdc0c4; }
  .mid { flex: 1; display: flex; min-height: 0; background: linear-gradient(#ecedef, #e2e3e5 45%, #d3d5d7 80%, #d3d5d7); }
  .left { width: 257px; border-right: 1.5px solid #c4c7ca; display: flex; flex-direction: column; overflow: hidden; flex: none; }
  .lhead { height: 42px; margin: 0 9px 0 6px; border-bottom: 1px solid #bfc2cc; display: grid; grid-template-columns: 45px 8px 58px 1fr 12px; align-items: center; padding: 9px 0 0 6px; flex: none; }
  .lhead i { width: 1px; height: 21px; background: #bbbfc4; }
  .lhead .on { color: #e07a3c; border-bottom: 3px solid #d08050; height: 35px; line-height: 34px; padding-left: 6px; margin-top: -1px; }
  .lhead .ic { grid-column: 5; margin-top: -16px; }
  .lbody { flex: 1; min-height: 0; display: flex; padding-top: 8px; height: 802px; }
  .thumbs { width: 224px; padding-top: 11px; height: 792px; overflow: hidden; flex: none; }
  .th { height: 124.200px; display: flex; align-items: flex-start; }
  .no { width: 34px; margin-left: 17px; height: 20px; text-align: center; padding: 0 1px 0 0; color: #7b7e82; font: 18px/19px 'DejaVu Serif', serif; font-stretch: condensed; }
  .th .pic { display: block; overflow: visible; }
  .sel .no { height: 42px; background: #ec9a68; color: #fff; clip-path: polygon(0 0, 100% 0, 100% 100%, 0 58%); }
  .sb { background: #d0d4d9; display: flex; flex-direction: column; align-items: center; flex: none; }
  .grip { background: #f4f5f4; border: 1.5px solid #c2c5ca; display: flex; flex-direction: column; gap: 4px; align-items: center; justify-content: center; }
  .grip i { width: 10px; height: 1.500px; background: #c9cbcc; }
  .lsb { width: 26px; height: 792px; padding: 7px 0 6px; }
  .lsb .grip { width: 20px; height: 56px; margin: 33px 0 auto; }

  .center { flex: 1; display: flex; flex-direction: column; }
  .canvas { height: 797px; display: flex; border-bottom: 2px solid #b9bcbf; }
  .stage { flex: 1; display: flex; flex-direction: column; justify-content: space-between; padding-top: 71px; }
  .slide { width: 994px; height: 629px; margin-left: 23px; box-shadow: 0 0 5px #a9adb4; }
  .slide svg { display: block; }
  .st { font-family: 'Liberation Serif', serif; fill: #151718; }
  .brandtx { font: 900 22.500px 'Noto Sans CJK SC', sans-serif; fill: #1d1f1e; }
  .slogan { font: italic 300 10px 'Noto Sans CJK SC', sans-serif; fill: #222; }
  .hsb { height: 26px; background: #d0d4d9; display: flex; justify-content: space-between; align-items: center; padding: 0 6px 0 8px; }
  .hsb i { border: 5px solid transparent; width: 0; height: 0; }
  .hl { border-right-color: #bfc3c8 !important; border-left: 0 !important; }
  .hr { border-left-color: #bfc3c8 !important; border-right: 0 !important; }
  .csb { width: 26px; padding-top: 14px; }
  .csb .grip { width: 20px; height: 57px; margin: 39px 0 auto; }
  .ends { display: flex; flex-direction: column; align-items: center; padding-bottom: 29px; }
  .ends .tri { margin-top: 1px; }
  .ends .tri:nth-child(2) { margin-top: 11px; }
  .ends .caret:nth-child(4) { margin-top: 10px; }
  .ends .caret:nth-child(5) { margin-top: 1px; }
  .note { flex: 1; background: #d6d7d9; font-size: 21.400px; line-height: 24px; padding: 9px 0 0 16px; color: #333; font-weight: 300; }

  .side { width: 53px; border-right: 1.5px solid #c3c6ca; background: #ebecee; flex: none; }
  .handle { display: block; width: 21px; height: 4px; margin: 15px 0 25px 17px; border: solid #cfd3dc; border-width: 1.5px 0; }
  .si { height: 64.800px; padding: 0 0 0 12px; position: relative; }
  .si .ic { margin-left: 5px; }
  .si span { display: block; margin-top: 6px; }
  .cur::after { content: ''; position: absolute; right: -4px; top: 10px; width: 8px; height: 8px; background: #f7f7f7; border: solid #c3c6ca; border-width: 0 0 1px 1px; transform: rotate(45deg); }
  .panel { flex: 1; display: flex; flex-direction: column; }
  .ph { height: 34px; display: grid; grid-template-columns: 70px 1fr 18px; align-items: center; padding: 0 4px 0 13px; border-bottom: 1.5px solid #bdc0c4; margin-right: 7px; }
  .pmain { flex: 1; display: flex; }
  .pb { width: 346px; background: #f7f7f6; border-right: 1.500px solid #bdc0c4; padding: 6px 7px 0 9px; flex: none; }
  label { display: block; height: 23px; line-height: 21px; }
  .sel2 { height: 27px; border: 1.500px solid #b6b9bd; background: #fff; display: flex; align-items: center; justify-content: space-between; padding: 0 8px 2px 6px; margin-bottom: 6px; }
  .list { height: 705px; margin-top: 2px; border: 1.500px solid #d0d2d4; background: #fefefe; display: flex; overflow: hidden; }
  .secs { width: 296px; padding: 1px 0 0 1px; }
  h4 { margin: 0; width: 294px; height: 27px; background: #e7e8e6; font-weight: 400; color: #5b5e60; line-height: 24px; padding-left: 11px; font-size: 16px; }
  .sg { display: grid; grid-template-columns: repeat(7, 41.800px); grid-auto-rows: 37.800px; padding: 0 0 0 10px; align-items: start; width: 311px; }
  .sg .shape { margin-top: 7px; }
  .psb { width: 22px; background: #f3f4f4; margin-left: 7px; padding: 9px 0 10px; }
  .psb .grip { width: 22px; height: 406px; margin: 9px 0 auto; }
  button { display: block; width: 105px; height: 31px; margin-top: 12px; border: 1.500px solid #b3b6ba; background: #fcfdfd; font: inherit; font-size: 16px; padding: 0 0 3px; color: inherit; text-align: center; }
  .edge { flex: 1; padding-top: 366px; }
  .edge div { height: 137px; background: #e8671d; display: grid; place-items: center; }
  .edge i { border: 4px solid transparent; border-left: 4px solid #fff; border-right: 0; }

  .status { height: 31px; flex: none; background: linear-gradient(#dcdddf 85%, #8e9092); border-top: 1.500px solid #c3c6ca; display: grid; align-items: center; grid-template-columns: 297px 93px 549px 8px 15px 69px 6px 26px 50px 43px 37px 45px 54px 24px 189px 26px 14px; padding-left: 177px; color: #3a4044; overflow: hidden; }
  .status .sep { height: 26px; }
  .status em { width: 8px; height: 9px; background: #1b74e4; }
  q { quotes: none; font-size: 18px; line-height: 16px; letter-spacing: .2px; }
  .vn { width: 30px; height: 30px; background: #efb592; display: grid; place-items: center; }
  .pc { color: #55595b; font-size: 17.500px; letter-spacing: .3px; }
  .minus { width: 14px; height: 3px; background: #6a7486; }
  .slider { width: 181px; height: 20px; position: relative; background: linear-gradient(90deg, #df8c61 35%, #8a93a0 35%) center / 100% 2.500px no-repeat; }
  .slider b { position: absolute; left: 62px; top: 0; width: 10px; height: 20px; background: #f0f0ee; border: 1.500px solid #777d88; }
  .slider u { position: absolute; left: 90px; top: 6px; width: 1px; height: 8px; background: #8a93a0; }

  .task { height: 40px; flex: none; display: flex; background: #31363b; color: #e9eaeb; font: 17.500px/24px 'Noto Sans', 'Noto Sans CJK SC', sans-serif; font-stretch: normal; border-top: 1px solid #4a4d50; margin-bottom: 2px; }
  .tl { width: 191px; display: grid; grid-template-columns: 34px 67px 48px 22px; align-items: center; padding-left: 10px; flex: none; }
  .pager { width: 56px; height: 36px; display: grid; grid-template-columns: 28px 27px; grid-template-rows: 17px 17px; gap: 1px; }
  .pager i { background: #3e434a; }
  .pager .a { background: #76bde0; }
  .pager .b { background: #5f6467; border: 1px solid #9a9da0; }
  .tk { width: 212px; margin-right: 1.400px; border-top: 3px solid #4c5053; background: #2f3437; display: flex; align-items: center; padding-bottom: 3px; flex: none; overflow: hidden; }
  .tk span { width: 40px; display: flex; padding-left: 6px; flex: none; }
  .tk p { margin: 0; white-space: pre; }
  .lit { background: #4d5154; }
  .on.tk { border-top-color: #2a73b8; }
  .tk.on { background: #363a3d; }
  .on.tk span { padding-left: 4px; }
  .tray { flex: 1; display: grid; grid-template-columns: 38px 37px 35px 34px 36px 36px 35px 36px 37px 29px 98px; align-items: center; padding-left: 10px; }
  .clock { color: #c9cbcc; font-weight: 300; display: flex; flex-direction: column; align-items: center; justify-content: space-between; height: 37px; }
  .clock span { font-size: 20px; line-height: 18px; margin-left: -3px; }
  .clock small { font-size: 15px; line-height: 15px; }
</style>
